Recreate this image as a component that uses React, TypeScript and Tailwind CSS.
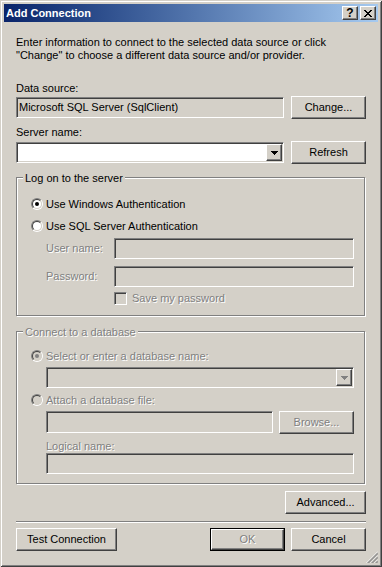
import React from "react";

const SUNKEN =
  "border border-t-[#808080] border-l-[#808080] border-b-white border-r-white shadow-[inset_1px_1px_0_#404040,inset_-1px_-1px_0_#d4d0c8]";
const RAISED =
  "border border-t-white border-l-white border-b-[#404040] border-r-[#404040] shadow-[inset_-1px_-1px_0_#808080]";
const DIS = "text-[#808080] [text-shadow:1px_1px_0_#fff]";

function Button({
  label,
  w,
  disabled = false,
  isDefault = false,
}: {
  label: string;
  w: string;
  disabled?: boolean;
  isDefault?: boolean;
}) {
  const face = (
    <div
      className={`flex h-full w-full items-center justify-center bg-[#d4d0c8] ${RAISED} ${
        disabled ? DIS : "text-black"
      }`}
    >
      {label}
    </div>
  );
  if (isDefault) {
    return <div className={`h-[23px] ${w} shrink-0 border border-black`}>{face}</div>;
  }
  return <div className={`h-[23px] ${w} shrink-0`}>{face}</div>;
}

function Arrow({ color }: { color: string }) {
  return (
    <svg width="7" height="4" viewBox="0 0 7 4" shapeRendering="crispEdges">
      <rect x="0" y="0" width="7" height="1" fill={color} />
      <rect x="1" y="1" width="5" height="1" fill={color} />
      <rect x="2" y="2" width="3" height="1" fill={color} />
      <rect x="3" y="3" width="1" height="1" fill={color} />
    </svg>
  );
}

function Combo({ w, disabled = false }: { w: string; disabled?: boolean }) {
  return (
    <div
      className={`flex h-[21px] ${w} justify-end p-[1px] ${SUNKEN} ${
        disabled ? "bg-[#d4d0c8]" : "bg-white"
      }`}
    >
      <div className={`flex h-[17px] w-[16px] items-center justify-center bg-[#d4d0c8] ${RAISED}`}>
        <Arrow color={disabled ? "#808080" : "#000"} />
      </div>
    </div>
  );
}

function TextBox({ w, h = "h-[21px]", text }: { w: string; h?: string; text?: string }) {
  return (
    <div className={`flex ${h} ${w} shrink-0 items-center bg-[#d4d0c8] pl-[2px] ${SUNKEN}`}>
      {text}
    </div>
  );
}

function Radio({ checked = false, disabled = false }: { checked?: boolean; disabled?: boolean }) {
  return (
    <div className="h-[12px] w-[12px] shrink-0 rounded-full border border-t-[#808080] border-l-[#808080] border-b-white border-r-white">
      <div
        className={`flex h-full w-full items-center justify-center rounded-full border border-t-[#404040] border-l-[#404040] border-b-[#d4d0c8] border-r-[#d4d0c8] ${
          disabled ? "bg-[#d4d0c8]" : "bg-white"
        }`}
      >
        {checked && (
          <div className={`h-[4px] w-[4px] rounded-full ${disabled ? "bg-[#808080]" : "bg-black"}`} />
        )}
      </div>
    </div>
  );
}

function Group({
  title,
  disabled = false,
  className,
  children,
}: {
  title: string;
  disabled?: boolean;
  className: string;
  children: React.ReactNode;
}) {
  return (
    <div
      className={`relative w-[349px] border border-[#808080] shadow-[inset_1px_1px_0_#fff,1px_1px_0_#fff] ${className}`}
    >
      <span
        className={`absolute -top-[6px] left-[6px] bg-[#d4d0c8] px-[2px] leading-[13px] ${
          disabled ? DIS : "text-black"
        }`}
      >
        {title}
      </span>
      {children}
    </div>
  );
}

function CloseGlyph() {
  const px = [
    [0, 0], [1, 0], [6, 0], [7, 0],
    [1, 1], [2, 1], [5, 1], [6, 1],
    [2, 2], [3, 2], [4, 2], [5, 2],
    [3, 3], [4, 3],
    [2, 4], [3, 4], [4, 4], [5, 4],
    [1, 5], [2, 5], [5, 5], [6, 5],
    [0, 6], [1, 6], [6, 6], [7, 6],
  ];
  return (
    <svg width="8" height="7" viewBox="0 0 8 7" shapeRendering="crispEdges">
      {px.map(([x, y]) => (
        <rect key={`${x}-${y}`} x={x} y={y} width="1" height="1" fill="#000" />
      ))}
    </svg>
  );
}

function SizeGrip() {
  return (
    <svg width="12" height="12" viewBox="0 0 12 12" className="absolute bottom-[4px] right-[4px]">
      {[0, 4, 8].map((o) => (
        <g key={o}>
          <line x1={12} y1={o + 0.5} x2={o + 0.5} y2={12} stroke="#fff" strokeWidth="1" />
          <line x1={12} y1={o + 1.5} x2={o + 1.5} y2={12} stroke="#808080" strokeWidth="1" />
          <line x1={12} y1={o + 2.5} x2={o + 2.5} y2={12} stroke="#808080" strokeWidth="1" />
        </g>
      ))}
    </svg>
  );
}

export default function App() {
  return (
    <div className="font-['Liberation_Sans',Arial,sans-serif] text-[11px] leading-[13px] text-black">
      <div className="relative h-[567px] w-[382px] bg-[#d4d0c8] p-[4px] shadow-[inset_1px_1px_0_#d4d0c8,inset_-1px_-1px_0_#404040,inset_2px_2px_0_#fff,inset_-2px_-2px_0_#808080]">
        {/* title bar */}
        <div className="flex h-[18px] items-center bg-linear-to-r from-[#0a246a] to-[#a6caf0] pl-[2px] pr-[2px]">
          <span className="font-bold text-white">Add Connection</span>
          <div className="ml-auto flex gap-[2px]">
            <div className={`flex h-[14px] w-[16px] items-center justify-center bg-[#d4d0c8] ${RAISED}`}>
              <span className="text-[12px] font-bold leading-[12px]">?</span>
            </div>
            <div className={`flex h-[14px] w-[16px] items-center justify-center bg-[#d4d0c8] ${RAISED}`}>
              <CloseGlyph />
            </div>
          </div>
        </div>

        <div className="flex flex-col px-[12px]">
          <p className="mt-[14px]">
            Enter information to connect to the selected data source or click
            <br />
            "Change" to choose a different data source and/or provider.
          </p>

          <div className="mt-[20px]">Data source:</div>
          <div className="mt-[1px] flex h-[23px] items-center justify-between">
            <TextBox w="w-[268px]" text="Microsoft SQL Server (SqlClient)" />
            <Button label="Change..." w="w-[75px]" />
          </div>

          <div className="mt-[7px]">Server name:</div>
          <div className="mt-[2px] flex h-[23px] items-center justify-between">
            <Combo w="w-[268px]" />
            <Button label="Refresh" w="w-[75px]" />
          </div>

          <Group title="Log on to the server" className="mt-[13px] pb-[10px]">
            <div className="ml-[14px] mt-[18px] flex h-[16px] items-center gap-[3px]">
              <Radio checked />
              <span>Use Windows Authentication</span>
            </div>
            <div className="ml-[14px] mt-[6px] flex h-[16px] items-center gap-[3px]">
              <Radio />
              <span>Use SQL Server Authentication</span>
            </div>
            <div className="ml-[29px] mt-[4px] flex h-[21px] items-center">
              <span className={`w-[68px] ${DIS}`}>User name:</span>
              <TextBox w="w-[240px]" />
            </div>
            <div className="ml-[29px] mt-[7px] flex h-[21px] items-center">
              <span className={`w-[68px] ${DIS}`}>Password:</span>
              <TextBox w="w-[240px]" />
            </div>
            <div className="ml-[97px] mt-[5px] flex h-[13px] items-center gap-[5px]">
              <div className={`h-[13px] w-[13px] bg-[#d4d0c8] ${SUNKEN}`} />
              <span className={DIS}>Save my password</span>
            </div>
          </Group>

          <Group title="Connect to a database" disabled className="mt-[15px] pb-[9px]">
            <div className="ml-[14px] mt-[16px] flex h-[16px] items-center gap-[3px]">
              <Radio checked disabled />
              <span className={DIS}>Select or enter a database name:</span>
            </div>
            <div className="ml-[29px] mt-[3px]">
              <Combo w="w-[308px]" disabled />
            </div>
            <div className="ml-[14px] mt-[4px] flex h-[16px] items-center gap-[3px]">
              <Radio disabled />
              <span className={DIS}>Attach a database file:</span>
            </div>
            <div className="ml-[29px] mt-[3px] flex h-[23px] items-start gap-[6px]">
              <TextBox w="w-[227px]" h="h-[22px]" />
              <Button label="Browse..." w="w-[75px]" disabled />
            </div>
            <div className={`ml-[29px] mt-[6px] ${DIS}`}>Logical name:</div>
            <div className="ml-[29px]">
              <TextBox w="w-[308px]" />
            </div>
          </Group>

          <div className="mt-[7px] flex justify-end">
            <Button label="Advanced..." w="w-[81px]" />
          </div>

          <div className="mt-[7px] h-[2px] border-t border-b border-t-[#808080] border-b-white" />

          <div className="mt-[5px] flex items-center">
            <Button label="Test Connection" w="w-[101px]" />
            <div className="ml-auto flex gap-[6px]">
              <Button label="OK" w="w-[75px]" disabled isDefault />
              <Button label="Cancel" w="w-[75px]" />
            </div>
          </div>
        </div>

        <SizeGrip />
      </div>
    </div>
  );
}
